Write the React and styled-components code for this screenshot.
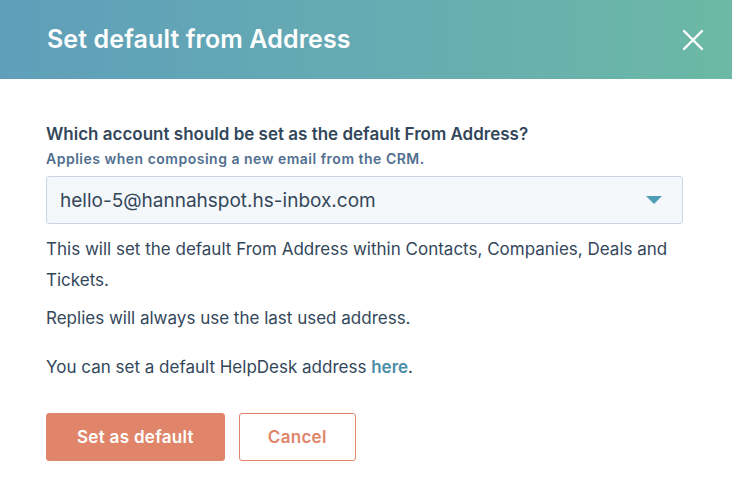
import React from 'react';
import styled, { createGlobalStyle } from 'styled-components';

const GlobalStyle = createGlobalStyle`
  html, body {
    margin: 0;
    padding: 0;
    background: #ffffff;
  }
  body {
    font-family: Inter, "Open Sans", sans-serif;
    color: #33475b;
  }
`;

export default function App() {
  return (
    <>
      <GlobalStyle />
      <Dialog>
        <Header>
          <Title>Set default from Address</Title>
          <CloseButton aria-label="Close">
            <svg width="22" height="22" viewBox="0 0 22 22">
              <path d="M2 2 L20 20 M20 2 L2 20" stroke="#fff" strokeWidth="2.4" strokeLinecap="round" />
            </svg>
          </CloseButton>
        </Header>
        <Body>
          <Label>Which account should be set as the default From Address?</Label>
          <Help>Applies when composing a new email from the CRM.</Help>
          <Select>
            <span>hello-5@hannahspot.hs-inbox.com</span>
            <Caret />
          </Select>
          <Paragraph first>
            This will set the default From Address within Contacts, Companies, Deals and Tickets.
          </Paragraph>
          <Paragraph>Replies will always use the last used address.</Paragraph>
          <Paragraph spaced>
            You can set a default HelpDesk address <Link href="#">here</Link>.
          </Paragraph>
          <Actions>
            <Button primary>Set as default</Button>
            <Button>Cancel</Button>
          </Actions>
        </Body>
      </Dialog>
    </>
  );
}

const Dialog = styled.div`
  width: 732px;
  height: 486px;
  background: #fff;
  overflow: hidden;
`;

const Header = styled.header`
  height: 79px;
  box-sizing: border-box;
  padding: 0 28px 0 47px;
  display: flex;
  align-items: center;
  justify-content: space-between;
  background: linear-gradient(90deg, #5f9fba 0%, #66acb2 55%, #6cb9a5 100%);
`;

const Title = styled.h1`
  margin: 0 0 2px;
  color: #fff;
  font-size: 25px;
  font-weight: 600;
  letter-spacing: 0.1px;
`;

const CloseButton = styled.button`
  border: 0;
  background: none;
  padding: 0;
  display: flex;
  cursor: pointer;
`;

const Body = styled.div`
  padding: 44px 49px 0 46px;
`;

const Label = styled.div`
  font-size: 17px;
  font-weight: 600;
  color: #33475b;
  line-height: 22px;
`;

const Help = styled.div`
  font-size: 14px;
  font-weight: 600;
  letter-spacing: 0.5px;
  color: #516f90;
  margin-top: 5px;
  line-height: 17px;
`;

const Select = styled.div`
  margin-top: 9px;
  height: 48px;
  box-sizing: border-box;
  background: #f5f8fa;
  border: 1px solid #cbd6e2;
  border-radius: 3px;
  display: flex;
  align-items: center;
  justify-content: space-between;
  padding: 0 20px 0 13px;
  font-size: 19px;
  color: #33475b;
`;

const Caret = styled.span`
  width: 0;
  height: 0;
  border-left: 8px solid transparent;
  border-right: 8px solid transparent;
  border-top: 8px solid #4f9cb7;
`;

const Paragraph = styled.p`
  margin: ${(p) => (p.first ? '10px' : p.spaced ? '18px' : '7px')} 0 0;
  font-size: 17px;
  line-height: 31px;
  color: #33475b;
`;

const Link = styled.a`
  color: #4a8ea8;
  font-weight: 600;
  text-decoration: none;
`;

const Actions = styled.div`
  margin-top: 30px;
  display: flex;
  gap: 14px;
`;

const Button = styled.button`
  height: 48px;
  box-sizing: border-box;
  padding: 0 ${(p) => (p.primary ? '30px' : '28px')};
  border-radius: 3px;
  font-family: inherit;
  font-size: 17px;
  font-weight: 600;
  letter-spacing: 0.3px;
  cursor: pointer;
  border: 1px solid #e0856a;
  background: ${(p) => (p.primary ? '#e0856a' : '#fff')};
  color: ${(p) => (p.primary ? '#fff' : '#e0856a')};
`;
